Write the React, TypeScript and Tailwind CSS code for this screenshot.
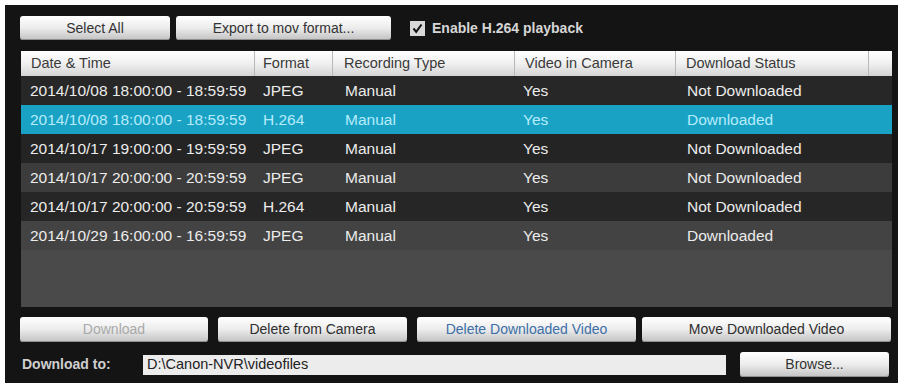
const rows = [
  { time: "2014/10/08 18:00:00 - 18:59:59", format: "JPEG", type: "Manual", inCam: "Yes", status: "Not Downloaded", bg: "bg-[#272727]" },
  { time: "2014/10/08 18:00:00 - 18:59:59", format: "H.264", type: "Manual", inCam: "Yes", status: "Downloaded", bg: "bg-[#1aa2c5]", selected: true },
  { time: "2014/10/17 19:00:00 - 19:59:59", format: "JPEG", type: "Manual", inCam: "Yes", status: "Not Downloaded", bg: "bg-[#242424]" },
  { time: "2014/10/17 20:00:00 - 20:59:59", format: "JPEG", type: "Manual", inCam: "Yes", status: "Not Downloaded", bg: "bg-[#3c3c3c]" },
  { time: "2014/10/17 20:00:00 - 20:59:59", format: "H.264", type: "Manual", inCam: "Yes", status: "Not Downloaded", bg: "bg-[#262626]" },
  { time: "2014/10/29 16:00:00 - 16:59:59", format: "JPEG", type: "Manual", inCam: "Yes", status: "Downloaded", bg: "bg-[#434343]" },
];

const btn =
  "flex items-center justify-center rounded-[3px] bg-gradient-to-b from-[#ffffff] via-[#ececec] to-[#c2c2c2] text-[14px] shadow-[inset_0_-1px_0_#8f8f8f]";

const App: React.FC = () => {
  return (
    <div className="w-[903px] h-[385px] bg-white pt-[5px] pl-[5px] font-['Liberation_Sans',Arial,sans-serif]">
      <div className="w-[893px] h-[378px] bg-[#141414] pl-[15px] pt-[11px] flex flex-col">
        {/* top toolbar */}
        <div className="flex items-center h-[24px]">
          <button className={`${btn} w-[150px] h-[24px] text-[#333]`}>Select All</button>
          <button className={`${btn} w-[215px] h-[24px] ml-[6px] text-[#333]`}>Export to mov format...</button>
          <div className="flex items-center ml-[19px]">
            <span className="w-[15px] h-[15px] bg-[#d8d8d8] flex items-center justify-center">
              <svg width="11" height="11" viewBox="0 0 11 11">
                <path d="M1.5 5.5 L4.2 8.8 L9.5 1.5" fill="none" stroke="#111" strokeWidth="2" />
              </svg>
            </span>
            <span className="ml-[7px] text-[14px] font-bold text-[#d6d6d6]">Enable H.264 playback</span>
          </div>
        </div>

        {/* table */}
        <div className="mt-[11px] ml-[1px] w-[871px] h-[256px] bg-[#4a4a4a] flex flex-col">
          <div className="flex h-[25px] bg-gradient-to-b from-[#ffffff] via-[#f0f0f0] to-[#d4d4d4] text-[14.5px] text-[#3a3a3a]">
            <div className="w-[234px] pl-[10px] flex items-center border-r border-[#b8b8b8]">Date &amp; Time</div>
            <div className="w-[78px] pl-[8px] flex items-center border-r border-[#b8b8b8]">Format</div>
            <div className="w-[182px] pl-[11px] flex items-center border-r border-[#b8b8b8]">Recording Type</div>
            <div className="w-[161px] pl-[10px] flex items-center border-r border-[#b8b8b8]">Video in Camera</div>
            <div className="w-[193px] pl-[10px] flex items-center border-r border-[#b8b8b8]">Download Status</div>
            <div className="flex-1" />
          </div>
          {rows.map((r, i) => (
            <div
              key={i}
              className={`flex h-[29px] items-center text-[15.5px] ${r.bg} ${r.selected ? "text-[#b5ecfb]" : "text-[#ececec]"}`}
            >
              <div className="w-[234px] pl-[9px]">{r.time}</div>
              <div className="w-[78px] pl-[8px]">{r.format}</div>
              <div className="w-[182px] pl-[12px]">{r.type}</div>
              <div className="w-[161px] pl-[8px]">{r.inCam}</div>
              <div className="w-[193px] pl-[11px]">{r.status}</div>
            </div>
          ))}
        </div>

        {/* action buttons */}
        <div className="flex mt-[10px] h-[25px]">
          <button className={`${btn} w-[188px] text-[#a9a9a9]`}>Download</button>
          <button className={`${btn} w-[189px] ml-[10px] text-[#2e2e2e]`}>Delete from Camera</button>
          <button className={`${btn} w-[219px] ml-[10px] text-[#3c6fa8]`}>Delete Downloaded Video</button>
          <button className={`${btn} w-[249px] ml-[6px] text-[#2e2e2e]`}>Move Downloaded Video</button>
        </div>

        {/* download path */}
        <div className="flex items-center mt-[10px] h-[25px]">
          <span className="w-[123px] pl-[2px] text-[14px] font-bold text-[#cfcfcf]">Download to:</span>
          <div className="w-[583px] h-[20px] bg-[#ececec] flex items-center pl-[4px] text-[14.5px] text-[#222]">
            D:\Canon-NVR\videofiles
          </div>
          <button className={`${btn} w-[149px] h-[25px] ml-[14px] text-[#333]`}>Browse...</button>
        </div>
      </div>
    </div>
  );
};

export default App;
